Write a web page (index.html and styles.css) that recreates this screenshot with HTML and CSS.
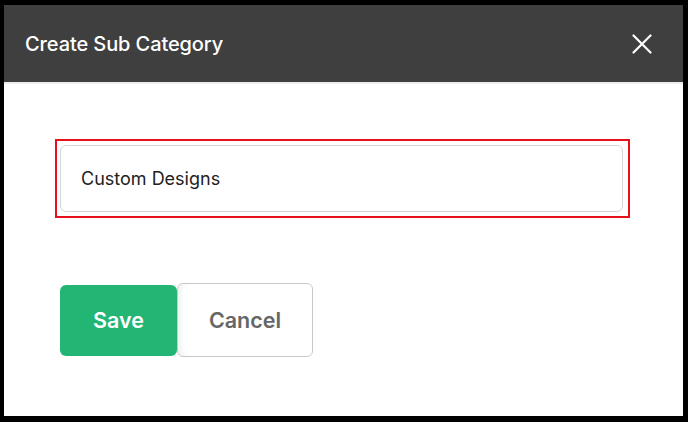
FILE: index.html
```html
<!DOCTYPE html>
<html>
<head>
<meta charset="utf-8">
<link rel="stylesheet" href="styles.css">
</head>
<body>
<div class="dialog">
  <div class="header">
    <h1 class="title">Create Sub Category</h1>
    <button class="close" aria-label="Close">
      <svg width="20" height="20" viewBox="0 0 20 20"><path d="M1.5 1.5 L18.5 18.5 M18.5 1.5 L1.5 18.5" stroke="#fff" stroke-width="2.2" stroke-linecap="round"/></svg>
    </button>
  </div>
  <div class="body">
    <div class="field-wrap">
      <div class="input">Custom Designs</div>
    </div>
    <div class="actions">
      <button class="btn save">Save</button>
      <button class="btn cancel">Cancel</button>
    </div>
  </div>
</div>
</body>
</html>
```
FILE: styles.css
```css
html, body {
  margin: 0;
  padding: 0;
  background: #000;
  width: 688px;
  height: 422px;
  overflow: hidden;
}
body {
  padding: 5px 5px 6px 4px;
  box-sizing: border-box;
  font-family: "Inter", "Noto Sans", sans-serif;
}
.dialog {
  background: #fff;
  height: 411px;
  display: flex;
  flex-direction: column;
}
.header {
  background: #3f3f3f;
  height: 77px;
  border-bottom: 2px solid #eeeeee;
  display: flex;
  align-items: center;
  justify-content: space-between;
  padding: 0 31px 0 21px;
}
.title {
  margin: 0;
  color: #fff;
  font-size: 20px;
  font-weight: 500;
  letter-spacing: -0.1px;
}
.close {
  background: none;
  border: 0;
  padding: 0;
  width: 20px;
  height: 20px;
  display: flex;
}
.body {
  padding: 55px 0 0 51px;
}
.field-wrap {
  width: 563px;
  border: 2px solid #e8111b;
  padding: 4px 5px 4px 3px;
}
.input {
  height: 65px;
  border: 1px solid #d6d6d6;
  border-radius: 6px;
  display: flex;
  align-items: center;
  padding-left: 20px;
  font-size: 18px;
  color: #222;
}
.actions {
  display: flex;
  align-items: center;
  margin-top: 65px;
  margin-left: 5px;
}
.btn {
  font-family: "Inter", "Noto Sans", sans-serif;
  font-size: 21.5px;
  font-weight: 600;
  border-radius: 6px;
  cursor: pointer;
}
.save {
  width: 117px;
  height: 71px;
  background: #22b573;
  color: #fff;
  border: 0;
}
.cancel {
  width: 136px;
  height: 74px;
  background: #fff;
  color: #666;
  border: 1px solid #c8c8c8;
  box-shadow: inset 6px 0 6px -4px rgba(0,0,0,0.08);
}
```
